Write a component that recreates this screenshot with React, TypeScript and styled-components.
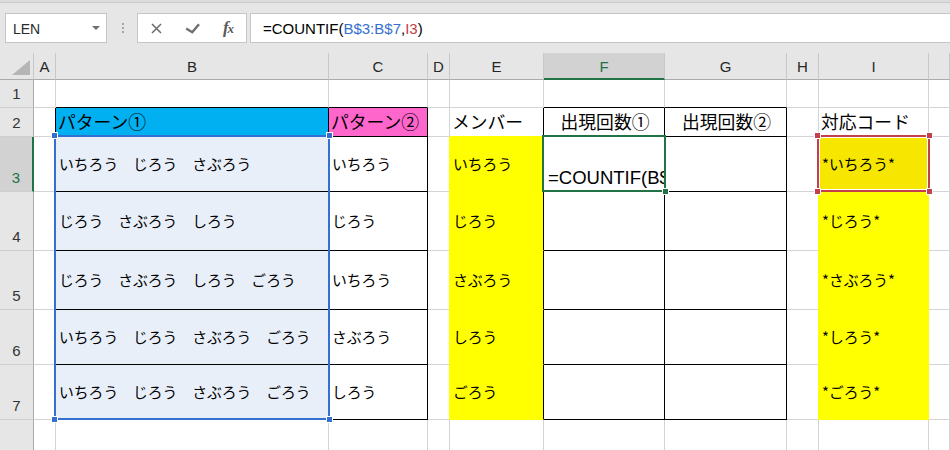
import React from 'react'
import styled, { createGlobalStyle } from 'styled-components'

const GRID_LINE = '#d4d4d4'
const HEAD_BG = '#e6e6e6'
const HEAD_ACTIVE = '#d2d2d2'
const EXCEL_GREEN = '#217346'
const REF_BLUE = '#3470d0'
const REF_RED = '#c3404a'
const YELLOW = '#ffff00'
const PICKED = '#e9eff9'
const UI_FONT = '"Liberation Sans", Arial, sans-serif'
const CELL_FONT = '"Noto Sans CJK JP", "Noto Sans", sans-serif'

const columns = ['A', 'B', 'C', 'D', 'E', 'F', 'G', 'H', 'I', 'J']
const rowCount = 8

type CellData = {
	text?: string
	fill?: string
	center?: boolean
	head?: boolean
	edit?: boolean
}

const sheet: Record<string, CellData> = {
	B2: { text: 'パターン①', fill: '#00b0f0', head: true },
	C2: { text: 'パターン②', fill: '#ff66cc', head: true },
	E2: { text: 'メンバー', head: true },
	F2: { text: '出現回数①', head: true, center: true },
	G2: { text: '出現回数②', head: true, center: true },
	I2: { text: '対応コード', head: true },
	F3: { text: '=COUNTIF(B$3:B$7,I3)', edit: true }
}

const patterns = [
	'いちろう　じろう　さぶろう',
	'じろう　さぶろう　しろう',
	'じろう　さぶろう　しろう　ごろう',
	'いちろう　じろう　さぶろう　ごろう',
	'いちろう　じろう　さぶろう　ごろう'
]
const picks = ['いちろう', 'じろう', 'いちろう', 'さぶろう', 'しろう']
const members = ['いちろう', 'じろう', 'さぶろう', 'しろう', 'ごろう']

members.forEach((name, i) => {
	const r = i + 3
	sheet['B' + r] = { text: patterns[i], fill: PICKED }
	sheet['C' + r] = { text: picks[i] }
	sheet['E' + r] = { text: name, fill: YELLOW }
	sheet['I' + r] = { text: `*${name}*`, fill: r === 3 ? '#f6e600' : YELLOW }
})

// cells framed with thin black borders: B2:C7 and F2:G7
const boxedCols = ['B', 'C', 'F', 'G']
const isBoxed = (c: number, r: number) => boxedCols.includes(columns[c]) && r >= 2 && r <= 7
const fillOf = (c: number, r: number) => sheet[`${columns[c]}${r}`]?.fill

const rightEdge = (c: number, r: number) =>
	isBoxed(c, r) || isBoxed(c + 1, r) ? '#000' : fillOf(c, r) ?? fillOf(c + 1, r) ?? GRID_LINE
const bottomEdge = (c: number, r: number) =>
	isBoxed(c, r) || isBoxed(c, r + 1) ? '#000' : fillOf(c, r) ?? fillOf(c, r + 1) ?? GRID_LINE

const App = () => {
	const rows = Array.from({ length: rowCount }, (_, i) => i + 1)

	return (
		<>
			<GlobalStyle />
			<Screen>
				<TopEdge />
				<FormulaRow>
					<NameBox>
						LEN
						<Caret />
					</NameBox>
					<Grip>
						<Dot />
						<Dot />
						<Dot />
					</Grip>
					<FxBox>
						<FxSlot>
							<svg width="11" height="11" viewBox="0 0 11 11">
								<path d="M1 1L10 10M10 1L1 10" stroke="#6b6b6b" strokeWidth="1.5" />
							</svg>
						</FxSlot>
						<FxSlot>
							<svg width="15" height="11" viewBox="0 0 15 11">
								<path d="M1.2 5.6L7.2 9.3L14 1.2" stroke="#6f6f6f" strokeWidth="2.4" fill="none" />
							</svg>
						</FxSlot>
						<FxSlot>
							<FxMark>
								f<small>x</small>
							</FxMark>
						</FxSlot>
					</FxBox>
					<FormulaInput>
						=COUNTIF(<Ref $color={REF_BLUE}>B$3:B$7</Ref>,<Ref $color={REF_RED}>I3</Ref>)
					</FormulaInput>
				</FormulaRow>

				<Sheet>
					<Corner>
						<svg width="18" height="15" viewBox="0 0 18 15">
							<path d="M0 15L18 15L18 0Z" fill="#b5b5b5" />
						</svg>
					</Corner>
					{columns.map((col, i) => (
						<ColHead key={col} $c={i + 2} $active={col === 'F'}>
							{col === 'J' ? '' : col}
						</ColHead>
					))}

					{rows.map(r => (
						<React.Fragment key={r}>
							<RowHead $r={r + 1} $active={r === 3}>
								{r < 8 ? r : ''}
							</RowHead>
							{columns.map((col, c) => {
								const data = sheet[col + r] ?? {}
								return (
									<Cell
										key={col}
										$c={c + 2}
										$r={r + 1}
										$fill={data.fill}
										$right={rightEdge(c, r)}
										$bottom={bottomEdge(c, r)}
										$center={data.center}
										$head={data.head}
										$edit={data.edit}
									>
										{data.text}
									</Cell>
								)
							})}
						</React.Fragment>
					))}

					<RangeFrame $c="3 / 4" $r="4 / 9" $color={REF_BLUE}>
						<Handle $color={REF_BLUE} $x="left" $y="top" />
						<Handle $color={REF_BLUE} $x="right" $y="top" />
						<Handle $color={REF_BLUE} $x="left" $y="bottom" />
						<Handle $color={REF_BLUE} $x="right" $y="bottom" />
					</RangeFrame>
					<RangeFrame $c="10 / 11" $r="4 / 5" $color={REF_RED} $inner>
						<Handle $color={REF_RED} $x="left" $y="top" />
						<Handle $color={REF_RED} $x="right" $y="top" />
						<Handle $color={REF_RED} $x="left" $y="bottom" />
						<Handle $color={REF_RED} $x="right" $y="bottom" />
					</RangeFrame>
					<RangeFrame $c="7 / 8" $r="4 / 5" $color={EXCEL_GREEN}>
						<Handle $color={EXCEL_GREEN} $x="right" $y="bottom" />
					</RangeFrame>
				</Sheet>
			</Screen>
		</>
	)
}

const GlobalStyle = createGlobalStyle`
	html, body {
		margin: 0;
		padding: 0;
		background: #fff;
		font-family: ${UI_FONT};
	}
`
const Screen = styled.div`
	width: 950px;
	height: 450px;
	overflow: hidden;
	background: ${HEAD_BG};
`
const TopEdge = styled.div`
	height: 2px;
	background: #dcdcdc;
	border-bottom: 1px solid #c9c9c9;
`
const FormulaRow = styled.div`
	height: 50px;
	display: flex;
	align-items: center;
	padding-left: 5px;
	background: ${HEAD_BG};
`
const Field = styled.div`
	box-sizing: border-box;
	height: 30px;
	background: #fff;
	border: 1px solid #c6c6c6;
	display: flex;
	align-items: center;
`
const NameBox = styled(Field)`
	width: 102px;
	padding: 2px 6px 0 7px;
	font-size: 14px;
	color: #2b2b2b;
`
const Caret = styled.span`
	margin-left: auto;
	margin-bottom: 2px;
	border-left: 4px solid transparent;
	border-right: 4px solid transparent;
	border-top: 4px solid #707070;
`
const Grip = styled.div`
	display: flex;
	flex-direction: column;
	gap: 2px;
	margin: 0 13px 0 15px;
`
const Dot = styled.span`
	width: 2px;
	height: 2px;
	background: #a6a6a6;
`
const FxBox = styled(Field)`
	width: 110px;
	display: grid;
	grid-template-columns: repeat(3, 36px);
`
const FxSlot = styled.div`
	display: flex;
	align-items: center;
	justify-content: center;
	height: 100%;
`
const FxMark = styled.span`
	font-family: "Liberation Serif", "Times New Roman", serif;
	font-style: italic;
	font-weight: bold;
	font-size: 17px;
	letter-spacing: -1px;
	color: #5a5a5a;
	small {
		font-size: 13px;
	}
`
const FormulaInput = styled(Field)`
	flex: 1;
	margin-left: 3px;
	border-right: none;
	padding-left: 12px;
	font-size: 15px;
	color: #000;
	white-space: nowrap;
`
const Ref = styled.span<{ $color: string }>`
	color: ${p => p.$color};
`
const Sheet = styled.div`
	display: grid;
	grid-template-columns: 34px 22px 273px 99px 22px 94px 121px 122px 32px 110px 1fr;
	grid-template-rows: 27px 28px 29px 55px 59px 59px 55px 55px 60px;
	background: #fff;
`
const Corner = styled.div`
	grid-column: 1;
	grid-row: 1;
	box-sizing: border-box;
	background: ${HEAD_BG};
	border-right: 1px solid #c8c8c8;
	border-bottom: 1px solid #ababab;
	display: flex;
	align-items: flex-end;
	justify-content: flex-end;
	padding: 0 3px 4px 0;
`
const ColHead = styled.div<{ $c: number; $active?: boolean }>`
	grid-column: ${p => p.$c};
	grid-row: 1;
	box-sizing: border-box;
	display: flex;
	align-items: center;
	justify-content: center;
	padding-top: 1px;
	background: ${p => (p.$active ? HEAD_ACTIVE : HEAD_BG)};
	border-right: 1px solid #c8c8c8;
	border-bottom: ${p => (p.$active ? `2px solid ${EXCEL_GREEN}` : '1px solid #ababab')};
	font-size: 15px;
	color: ${p => (p.$active ? EXCEL_GREEN : '#262626')};
`
const RowHead = styled.div<{ $r: number; $active?: boolean }>`
	grid-column: 1;
	grid-row: ${p => p.$r};
	box-sizing: border-box;
	display: flex;
	align-items: flex-end;
	justify-content: center;
	padding-bottom: 4px;
	line-height: 18px;
	background: ${p => (p.$active ? HEAD_ACTIVE : HEAD_BG)};
	border-right: ${p => (p.$active ? `2px solid ${EXCEL_GREEN}` : '1px solid #ababab')};
	border-bottom: 1px solid #cfcfcf;
	font-size: 15px;
	color: ${p => (p.$active ? EXCEL_GREEN : '#333')};
`
const Cell = styled.div<{
	$c: number
	$r: number
	$fill?: string
	$right: string
	$bottom: string
	$center?: boolean
	$head?: boolean
	$edit?: boolean
}>`
	grid-column: ${p => p.$c};
	grid-row: ${p => p.$r};
	box-sizing: border-box;
	min-width: 0;
	display: flex;
	align-items: ${p => (p.$edit ? 'flex-end' : 'center')};
	justify-content: ${p => (p.$center ? 'center' : 'flex-start')};
	padding: ${p => (p.$edit ? '0 0 2px 4px' : p.$head ? '0 0 0 2px' : '0 0 0 3px')};
	background: ${p => p.$fill ?? '#fff'};
	border-right: 1px solid ${p => p.$right};
	border-bottom: 1px solid ${p => p.$bottom};
	font-family: ${p => (p.$edit ? UI_FONT : CELL_FONT)};
	font-size: ${p => (p.$edit ? '18.5px' : p.$head ? '17.8px' : '14.8px')};
	line-height: ${p => (p.$edit ? '22px' : '1.3')};
	color: #000;
	white-space: nowrap;
	overflow: hidden;
`
const RangeFrame = styled.div<{ $c: string; $r: string; $color: string; $inner?: boolean }>`
	grid-column: ${p => p.$c};
	grid-row: ${p => p.$r};
	margin: -2px -1px 0 -2px;
	border: 2px solid ${p => p.$color};
	box-shadow: ${p => (p.$inner ? 'inset 0 0 0 1px #fff' : 'none')};
	position: relative;
	z-index: 2;
	pointer-events: none;
`
const Handle = styled.span<{ $color: string; $x: 'left' | 'right'; $y: 'top' | 'bottom' }>`
	position: absolute;
	width: 5px;
	height: 5px;
	background: ${p => p.$color};
	border: 1px solid #fff;
	${p => p.$x}: -5px;
	${p => p.$y}: -5px;
`

export default App
